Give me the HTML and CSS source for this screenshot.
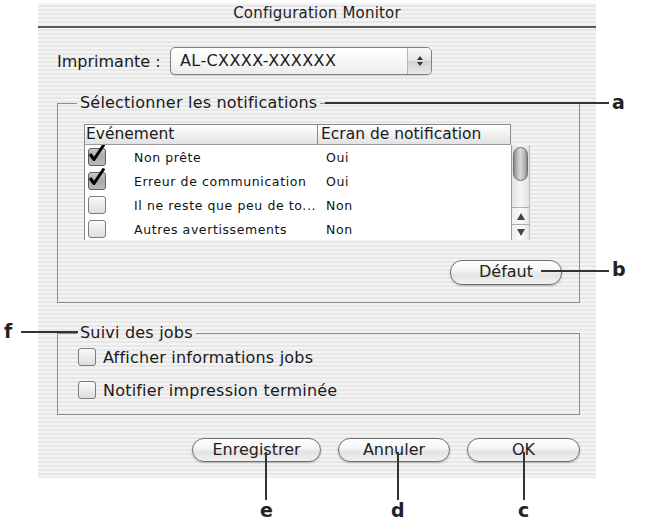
FILE: index.html
```html
<!DOCTYPE html>
<html lang="fr">
<head>
<meta charset="utf-8">
<title>Configuration Monitor</title>
<link rel="stylesheet" href="styles.css">
</head>
<body>
<div class="page">
  <div class="window">
    <div class="titlebar">Configuration Monitor</div>
    <div class="content">
      <div class="printer-row">
        <span class="label">Imprimante :</span>
        <div class="popup">
          <span class="popup-text">AL-CXXXX-XXXXXX</span>
          <span class="popup-arrows">
            <svg width="8" height="12" viewBox="0 0 8 12"><path d="M4 1 L7 5 L1 5 Z" fill="#333"/><path d="M1 7 L7 7 L4 11 Z" fill="#333"/></svg>
          </span>
        </div>
      </div>

      <fieldset class="group group-notif">
        <legend>Sélectionner les notifications</legend>
        <div class="list">
          <div class="list-header">
            <div class="hcol hcol-event">Evénement</div>
            <div class="hcol hcol-screen">Ecran de notification</div>
          </div>
          <div class="list-body">
            <div class="row">
              <span class="cb cb-checked"><svg width="22" height="22" viewBox="0 0 22 22"><path d="M5 11 L9 16.5 L19 1.5" fill="none" stroke="#000" stroke-width="3" stroke-linejoin="round"/></svg></span>
              <span class="cell-event">Non prête</span>
              <span class="cell-screen">Oui</span>
            </div>
            <div class="row">
              <span class="cb cb-checked"><svg width="22" height="22" viewBox="0 0 22 22"><path d="M5 11 L9 16.5 L19 1.5" fill="none" stroke="#000" stroke-width="3" stroke-linejoin="round"/></svg></span>
              <span class="cell-event">Erreur de communication</span>
              <span class="cell-screen">Oui</span>
            </div>
            <div class="row">
              <span class="cb"></span>
              <span class="cell-event">Il ne reste que peu de to...</span>
              <span class="cell-screen">Non</span>
            </div>
            <div class="row">
              <span class="cb"></span>
              <span class="cell-event">Autres avertissements</span>
              <span class="cell-screen">Non</span>
            </div>
          </div>
          <div class="scrollbar">
            <div class="thumb"></div>
            <div class="track"></div>
            <div class="arrow arrow-up"><svg width="8" height="7" viewBox="0 0 8 7"><path d="M4 0 L8 7 L0 7 Z" fill="#444"/></svg></div>
            <div class="arrow arrow-down"><svg width="8" height="7" viewBox="0 0 8 7"><path d="M0 0 L8 0 L4 7 Z" fill="#444"/></svg></div>
          </div>
        </div>
        <div class="default-row">
          <button class="aqua-btn btn-default">Défaut</button>
        </div>
      </fieldset>

      <fieldset class="group group-jobs">
        <legend>Suivi des jobs</legend>
        <label class="check-line"><span class="cb"></span><span>Afficher informations jobs</span></label>
        <label class="check-line"><span class="cb"></span><span>Notifier impression terminée</span></label>
      </fieldset>

      <div class="button-row">
        <button class="aqua-btn btn-save">Enregistrer</button>
        <button class="aqua-btn btn-cancel">Annuler</button>
        <button class="aqua-btn btn-ok">OK</button>
      </div>
    </div>
  </div>

  <div class="callout line-a"></div><span class="callout-letter letter-a">a</span>
  <div class="callout line-b"></div><span class="callout-letter letter-b">b</span>
  <div class="callout line-f"></div><span class="callout-letter letter-f">f</span>
  <div class="callout vline line-e"></div><span class="callout-letter letter-e">e</span>
  <div class="callout vline line-d"></div><span class="callout-letter letter-d">d</span>
  <div class="callout vline line-c"></div><span class="callout-letter letter-c">c</span>
</div>
</body>
</html>
```

FILE: styles.css
```css
html, body {
  margin: 0;
  padding: 0;
  background: #ffffff;
}

.page {
  position: relative;
  width: 645px;
  height: 523px;
  overflow: hidden;
  padding-top: 3px;
  box-sizing: border-box;
  font-family: "DejaVu Sans", "Open Sans", sans-serif;
  color: #1a1a1a;
}

.window {
  margin-left: 38px;
  width: 558px;
  height: 475px;
  background: repeating-linear-gradient(to bottom, #f4f4f4 0px, #f4f4f4 2px, #e7e7e7 2px, #e7e7e7 4px);
}

.titlebar {
  height: 23px;
  border-bottom: 2px solid #5a5a5a;
  text-align: center;
  font-size: 15px;
  letter-spacing: 0.2px;
  line-height: 21px;
  color: #222;
}

.content {
  padding-left: 19px;
}

/* Printer row */
.printer-row {
  display: flex;
  align-items: center;
  margin-top: 19px;
  height: 28px;
}

.label {
  font-size: 16px;
  width: 113px;
  color: #1a1a1a;
}

.popup {
  display: flex;
  width: 262px;
  height: 28px;
  box-sizing: border-box;
  border: 1px solid #7f7f7f;
  border-radius: 5px;
  background: linear-gradient(to bottom, #ffffff 0%, #f7f7f7 50%, #ececec 100%);
  box-shadow: 0 1px 1px rgba(0,0,0,0.15);
  overflow: hidden;
}

.popup-text {
  flex: 1;
  font-size: 16px;
  line-height: 26px;
  padding-left: 9px;
  letter-spacing: 0.4px;
}

.popup-arrows {
  width: 23px;
  display: flex;
  align-items: center;
  justify-content: center;
  border-left: 1px solid #b5b5b5;
  background: linear-gradient(to bottom, #fafafa 0%, #e3e3e3 50%, #d2d2d2 51%, #e8e8e8 100%);
}

/* Group boxes */
.group {
  margin: 0;
  box-sizing: border-box;
  width: 523px;
  border: 1px solid #8c8c8c;
  min-inline-size: 0;
}

.group legend {
  font-size: 16px;
  letter-spacing: 0.2px;
  line-height: 18px;
  padding: 0 3px;
  color: #1a1a1a;
}

.group-notif {
  margin-top: 19px;
  padding: 12px 17px 17px 26px;
}

.group-notif legend {
  margin-left: -7px;
}

.group-jobs {
  margin-top: 21px;
  padding: 6px 10px 15px 20px;
}

.group-jobs legend {
  margin-left: -1px;
}

/* List */
.list {
  display: grid;
  grid-template-columns: 427px 19px;
  grid-template-rows: 21px 95px;
}

.list-header {
  grid-column: 1;
  grid-row: 1;
  display: flex;
  box-sizing: border-box;
  border: 1px solid #8a8a8a;
  border-bottom-color: #9a9a9a;
  background: linear-gradient(to bottom, #ffffff 0%, #f1f1f1 50%, #e2e2e2 100%);
}

.hcol {
  font-size: 15.5px;
  line-height: 19px;
  padding-left: 1px;
  box-sizing: border-box;
}

.hcol-event {
  width: 233px;
  border-right: 1px solid #8a8a8a;
}

.hcol-screen {
  padding-left: 3px;
}

.list-body {
  grid-column: 1;
  grid-row: 2;
  background: #ffffff;
  border-left: 1px solid #8a8a8a;
  overflow: hidden;
}

.row {
  display: flex;
  align-items: center;
  height: 24px;
  font-size: 12.5px;
  letter-spacing: 0.6px;
  color: #111;
}

.row .cb {
  margin-left: 3px;
}

.cell-event {
  width: 184px;
  margin-left: 28px;
}

.cell-screen {
  margin-left: 8px;
}

/* Checkbox */
.cb {
  position: relative;
  display: inline-block;
  width: 18px;
  height: 18px;
  box-sizing: border-box;
  border: 1px solid #7c7c7c;
  border-radius: 3px;
  background: linear-gradient(to bottom, #fbfbfb 0%, #ececec 50%, #dedede 100%);
  flex-shrink: 0;
}

.cb-checked {
  background: linear-gradient(to bottom, #c9c9c9 0%, #a9a9a9 50%, #bdbdbd 100%);
  border-color: #5e5e5e;
}

.cb-checked svg {
  position: absolute;
  left: -4px;
  top: -6px;
}

/* Scrollbar */
.scrollbar {
  grid-column: 2;
  grid-row: 2;
  display: flex;
  flex-direction: column;
  box-sizing: border-box;
  border-left: 1px solid #9a9a9a;
  border-right: 1px solid #bdbdbd;
  background: linear-gradient(to right, #e2e2e2, #f5f5f5 50%, #e2e2e2);
}

.thumb {
  margin: 2px 1px 0 1px;
  height: 32px;
  border-radius: 8px;
  border: 1px solid #6f6f6f;
  background: linear-gradient(to right, #8e8e8e 0%, #c8c8c8 35%, #d9d9d9 50%, #b5b5b5 80%, #8a8a8a 100%);
}

.track {
  flex: 1;
}

.arrow {
  height: 16px;
  display: flex;
  align-items: center;
  justify-content: center;
  border-top: 1px solid #b0b0b0;
  background: linear-gradient(to right, #ececec, #fbfbfb 50%, #e6e6e6);
}

.arrow-down {
  height: 15px;
}

/* Buttons */
.aqua-btn {
  font-family: "DejaVu Sans", "Open Sans", sans-serif;
  font-size: 16px;
  color: #222;
  box-sizing: border-box;
  border: 1px solid #6e6e6e;
  border-radius: 12px;
  background: linear-gradient(to bottom, #ffffff 0%, #f6f6f6 40%, #e3e3e3 60%, #f2f2f2 100%);
  box-shadow: 0 1px 2px rgba(0,0,0,0.25);
  padding: 0 0 2px 0;
  cursor: default;
}

.default-row {
  display: flex;
  justify-content: flex-end;
  margin-top: 20px;
}

.btn-default {
  width: 112px;
  height: 25px;
}

.check-line {
  display: flex;
  align-items: center;
  height: 18px;
  font-size: 16px;
  letter-spacing: 0.2px;
  gap: 7px;
  margin-bottom: 15px;
}

.check-line:last-child {
  margin-bottom: 0;
}

.button-row {
  display: flex;
  justify-content: flex-end;
  gap: 17px;
  width: 523px;
  margin-top: 23px;
}

.btn-save { width: 129px; height: 24px; }
.btn-cancel { width: 112px; height: 24px; }
.btn-ok { width: 113px; height: 24px; }

/* Callouts (annotation overlay) */
.callout {
  position: absolute;
  background: #333;
  height: 2px;
}

.callout.vline {
  width: 2px;
  height: 48px;
  top: 452px;
}

.line-a { left: 325px; top: 102px; width: 284px; }
.line-b { left: 541px; top: 270px; width: 68px; }
.line-f { left: 21px; top: 331px; width: 57px; }
.line-e { left: 265px; }
.line-d { left: 397px; }
.line-c { left: 523px; }

.callout-letter {
  position: absolute;
  font-family: "DejaVu Sans", "Liberation Sans", sans-serif;
  font-weight: bold;
  font-size: 19px;
  line-height: 20px;
  color: #222;
}

.letter-a { left: 612px; top: 92px; }
.letter-b { left: 612px; top: 259px; }
.letter-f { left: 4px; top: 321px; }
.letter-e { left: 260px; top: 500px; }
.letter-d { left: 391px; top: 500px; }
.letter-c { left: 518px; top: 500px; }
```
